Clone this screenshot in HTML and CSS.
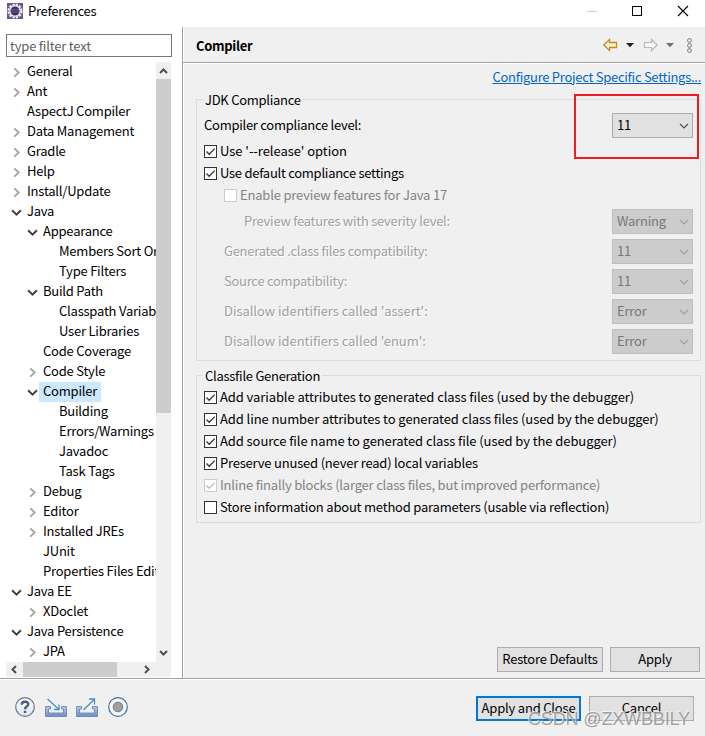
FILE: index.html
```html
<!DOCTYPE html>
<html lang="en">
<head>
<meta charset="utf-8">
<title>Preferences</title>
<link rel="stylesheet" href="styles.css">
</head>
<body>
<svg class="defs" width="0" height="0">
  <symbol id="right" viewBox="0 0 10 10"><path d="M3 1.2 7 5 3 8.8" fill="none" stroke="#a6a6a6" stroke-width="1.7"/></symbol>
  <symbol id="down" viewBox="0 0 10 10"><path d="M1 3 5 7 9 3" fill="none" stroke="#404040" stroke-width="1.8"/></symbol>
  <symbol id="tick" viewBox="0 0 13 13"><path d="M2.5 6.5 5.2 9.3 10.7 3.6" fill="none" stroke="currentColor" stroke-width="1.3"/></symbol>
  <symbol id="combo" viewBox="0 0 10 10"><path d="M1 3 5 7 9 3" fill="none" stroke="currentColor" stroke-width="1.2"/></symbol>
</svg>
<div class="window">
  <header class="titlebar">
    <svg class="app" width="16" height="16" viewBox="0 0 16 16"><rect width="16" height="16" fill="#67568f"/><circle cx="8" cy="8" r="6.5" fill="none" stroke="#eee" stroke-width="2.2" stroke-dasharray="2.2 1.2"/><circle cx="8" cy="8" r="5.2" fill="#3b2d63" stroke="#e6e6e6" stroke-width="1.4"/><path d="M4 6.8h8M4 9h8" stroke="#6d6592"/></svg>
    <span class="title">Preferences</span>
    <svg class="wc" width="110" height="22" viewBox="0 0 110 22"><path d="M2 11.5h10" stroke="#c8c8c8"/><rect x="47.500" y="6.500" width="9" height="9" fill="none" stroke="#000"/><path d="M93 6l10 10M103 6 93 16" stroke="#000" stroke-width="1.1"/></svg>
  </header>
  <div class="main">
    <aside class="side">
      <div class="filter">type filter text</div>
      <div class="treebox">
        <ul class="tree">
          <li><svg><use href="#right"/></svg><span>General</span></li>
          <li><svg><use href="#right"/></svg><span>Ant</span></li>
          <li><svg></svg><span>AspectJ Compiler</span></li>
          <li><svg><use href="#right"/></svg><span>Data Management</span></li>
          <li><svg><use href="#right"/></svg><span>Gradle</span></li>
          <li><svg><use href="#right"/></svg><span>Help</span></li>
          <li><svg><use href="#right"/></svg><span>Install/Update</span></li>
          <li><svg><use href="#down"/></svg><span>Java</span></li>
          <li class="l2"><svg><use href="#down"/></svg><span>Appearance</span></li>
          <li class="l3"><svg></svg><span>Members Sort Order</span></li>
          <li class="l3"><svg></svg><span>Type Filters</span></li>
          <li class="l2"><svg><use href="#down"/></svg><span>Build Path</span></li>
          <li class="l3"><svg></svg><span>Classpath Variables</span></li>
          <li class="l3"><svg></svg><span>User Libraries</span></li>
          <li class="l2"><svg></svg><span>Code Coverage</span></li>
          <li class="l2"><svg><use href="#right"/></svg><span>Code Style</span></li>
          <li class="l2"><svg><use href="#down"/></svg><span class="selected">Compiler</span></li>
          <li class="l3"><svg></svg><span>Building</span></li>
          <li class="l3"><svg></svg><span>Errors/Warnings</span></li>
          <li class="l3"><svg></svg><span>Javadoc</span></li>
          <li class="l3"><svg></svg><span>Task Tags</span></li>
          <li class="l2"><svg><use href="#right"/></svg><span>Debug</span></li>
          <li class="l2"><svg><use href="#right"/></svg><span>Editor</span></li>
          <li class="l2"><svg><use href="#right"/></svg><span>Installed JREs</span></li>
          <li class="l2"><svg></svg><span>JUnit</span></li>
          <li class="l2"><svg></svg><span>Properties Files Editor</span></li>
          <li><svg><use href="#down"/></svg><span>Java EE</span></li>
          <li class="l2"><svg><use href="#right"/></svg><span>XDoclet</span></li>
          <li><svg><use href="#down"/></svg><span>Java Persistence</span></li>
          <li class="l2"><svg><use href="#right"/></svg><span>JPA</span></li>
        </ul>
        <div class="vbar">
          <svg width="15" height="17" viewBox="0 0 15 17"><path d="M4 11 7.500 7.500 11 11" fill="none" stroke="#505050" stroke-width="2"/></svg>
          <div class="vthumb"></div>
          <svg class="end" width="15" height="17" viewBox="0 0 15 17"><path d="M4 6 7.500 9.500 11 6" fill="none" stroke="#505050" stroke-width="2"/></svg>
        </div>
        <div class="hbar">
          <svg width="17" height="15" viewBox="0 0 17 15"><path d="M10 4 6.500 7.500 10 11" fill="none" stroke="#505050" stroke-width="2"/></svg>
          <div class="hthumb"></div>
          <svg class="hend" width="17" height="15" viewBox="0 0 17 15"><path d="M7 4 10.500 7.500 7 11" fill="none" stroke="#505050" stroke-width="2"/></svg>
        </div>
      </div>
    </aside>
    <section class="page">
      <div class="pagehead">
        <h1>Compiler</h1>
        <svg width="96" height="20" viewBox="0 0 96 20"><path d="M1.800 10 7.500 4.500V7.500H14.500V12.500H7.500V15.500Z" fill="#fff6d2" stroke="#c58a20" stroke-width="1.300"/><path d="M24 8h8l-4 4.300Z" fill="#222"/><path d="M55.200 10 49.500 4.500V7.500H42.500V12.500H49.500V15.500Z" fill="#f7f7f7" stroke="#b8b8b8" stroke-width="1.200"/><path d="M64 8h8l-4 4.300Z" fill="#707070"/><g fill="#fff" stroke="#707070"><circle cx="87.500" cy="5.500" r="1.900"/><circle cx="87.500" cy="10.500" r="1.900"/><circle cx="87.500" cy="15.500" r="1.900"/></g></svg>
      </div>
      <div class="content">
        <a class="link">Configure Project Specific Settings...</a>
        <div class="group jdk">
          <div class="legend">JDK Compliance</div>
          <div class="row first"><span>Compiler compliance level:</span><div class="combo"><span>11</span><svg><use href="#combo"/></svg></div></div>
          <div class="check loose"><i><svg><use href="#tick"/></svg></i><span>Use '--release' option</span></div>
          <div class="check"><i><svg><use href="#tick"/></svg></i><span>Use default compliance settings</span></div>
          <div class="check off in wide"><i></i><span>Enable preview features for Java 17</span></div>
          <div class="row off in2"><span>Preview features with severity level:</span><div class="combo"><span>Warning</span><svg><use href="#combo"/></svg></div></div>
          <div class="row off"><span>Generated .class files compatibility:</span><div class="combo"><span>11</span><svg><use href="#combo"/></svg></div></div>
          <div class="row off"><span>Source compatibility:</span><div class="combo"><span>11</span><svg><use href="#combo"/></svg></div></div>
          <div class="row off loose"><span>Disallow identifiers called 'assert':</span><div class="combo"><span>Error</span><svg><use href="#combo"/></svg></div></div>
          <div class="row off loose"><span>Disallow identifiers called 'enum':</span><div class="combo"><span>Error</span><svg><use href="#combo"/></svg></div></div>
          <div class="highlight"></div>
        </div>
        <div class="group cls">
          <div class="legend">Classfile Generation</div>
          <div class="check wide"><i><svg><use href="#tick"/></svg></i><span>Add variable attributes to generated class files (used by the debugger)</span></div>
          <div class="check wide"><i><svg><use href="#tick"/></svg></i><span>Add line number attributes to generated class files (used by the debugger)</span></div>
          <div class="check wide"><i><svg><use href="#tick"/></svg></i><span>Add source file name to generated class file (used by the debugger)</span></div>
          <div class="check"><i><svg><use href="#tick"/></svg></i><span>Preserve unused (never read) local variables</span></div>
          <div class="check off"><i><svg><use href="#tick"/></svg></i><span>Inline finally blocks (larger class files, but improved performance)</span></div>
          <div class="check"><i></i><span>Store information about method parameters (usable via reflection)</span></div>
        </div>
        <div class="pagebuttons"><button class="restore">Restore Defaults</button><button class="apply">Apply</button></div>
      </div>
    </section>
  </div>
  <footer class="footer">
    <svg class="tools" width="116" height="24" viewBox="0 0 116 24">
      <defs><linearGradient id="tray" x2="0" y2="1"><stop stop-color="#b9cbe2"/><stop offset="1" stop-color="#6f8cbd"/></linearGradient><linearGradient id="ring" x2="0" y2="1"><stop stop-color="#fff"/><stop offset="1" stop-color="#dfe6ef"/></linearGradient></defs>
      <circle cx="11" cy="12" r="9.300" fill="url(#ring)" stroke="#65758f" stroke-width="1.200"/>
      <path d="M7.700 9.700C7.700 5.800 14.300 5.800 14.300 9.300 14.300 11.500 11 11.500 11 14.200M11 15.700V18" fill="none" stroke="#4c5c80" stroke-width="2.400"/>
      <path d="M31.500 11.500H36.500V14H34.500V18H49.500V14H47.500V11.500H52.500V21.500H31.500Z" fill="url(#tray)" stroke="#5f7fb0" stroke-width=".8"/>
      <path d="M33.500 4 44.500 14M45 9.500V14.500H40" fill="none" stroke="#4b8fc0" stroke-width="1.300"/>
      <path d="M62.500 11.500H67.500V14H65.500V18H80.500V14H78.500V11.500H83.500V21.500H62.500Z" fill="url(#tray)" stroke="#5f7fb0" stroke-width=".8"/>
      <path d="M69.500 15 80 4.500M75 4H80.500V9.500" fill="none" stroke="#4b8fc0" stroke-width="1.300"/>
      <circle cx="104" cy="12" r="9.300" fill="#f8fbfd" stroke="#3f719c" stroke-width="1.200"/><circle cx="104" cy="12" r="4.800" fill="#a0a0a0" stroke="#777"/>
    </svg>
    <button class="primary">Apply and Close</button><button class="cancel">Cancel</button>
    <div class="mark">CSDN @ZXWBBILY</div>
  </footer>
</div>
</body>
</html>
```
FILE: styles.css
```css
* { box-sizing: border-box; }
body { margin: 0; font: 13px/20px "Noto Sans CJK SC", "Noto Sans", sans-serif; letter-spacing: -.27px; color: #000; background: #fff; white-space: nowrap; overflow: hidden; }
svg { display: block; flex: none; }
.defs { position: absolute; }
.window { width: 705px; height: 736px; display: flex; flex-direction: column; overflow: hidden; }
.titlebar { height: 27px; flex: none; display: flex; padding-left: 7px; }
.app { margin-top: 3px; }
.title { margin: 1px auto 0 5px; }
.wc { margin-right: 10px; }
.main { height: 651px; flex: none; display: flex; }
.side { width: 182px; flex: none; padding: 7px 0 0 6px; }
.filter { width: 166px; height: 23px; border: 1px solid #7a7a7a; padding-left: 3px; line-height: 21px; color: #606060; letter-spacing: -.2px; }
.treebox { margin-top: 5px; width: 165px; height: 615px; display: grid; grid-template: 600px 15px / 150px 15px; }
.tree { margin: 0; padding: 0; list-style: none; overflow: hidden; letter-spacing: -.22px; }
.tree li { display: flex; height: 20px; align-items: center; padding-left: 5px; }
.tree li.l2 { padding-left: 21px; }
.tree li.l3 { padding-left: 37px; }
.tree svg { width: 11px; height: 11px; }
.tree span { margin-left: 1px; padding: 0 4px 2px; line-height: 18px; }
.selected { background: #cce8ff; }
.vbar { background: #f0f0f0; display: flex; flex-direction: column; }
.vthumb { height: 334px; background: #cdcdcd; }
.end { margin-top: auto; }
.hbar { grid-column: 1 / 3; background: #f0f0f0; display: flex; }
.hthumb { width: 94px; background: #cdcdcd; }
.hend { margin-left: 21px; }
.page { flex: 1; background: #f0f0f0; border-left: 1px solid #a0a0a0; box-shadow: inset 1px 0 #fff; display: flex; flex-direction: column; }
.pagehead { height: 37px; flex: none; border-bottom: 1px solid #fff; box-shadow: inset 0 -1px #a0a0a0; display: flex; justify-content: space-between; padding: 8px 7px 0 13px; }
h1 { margin: 1px 0 0; font-size: 13px; line-height: 20px; font-weight: 700; letter-spacing: -.3px; }
.content { flex: 1; display: flex; flex-direction: column; padding: 3px 4px 6px 13px; }
.link { align-self: flex-end; height: 20px; color: #0066cc; text-decoration: underline; }
.group { position: relative; border: 1px solid #dcdcdc; width: 505px; }
.jdk { height: 262px; margin-top: 12px; }
.cls { height: 148px; margin-top: 14px; letter-spacing: -.2px; }
.legend { width: max-content; height: 20px; margin: -10px 0 0 6px; padding: 0 2px; line-height: 19px; background: #f0f0f0; letter-spacing: -.27px; }
.row { display: flex; justify-content: space-between; align-items: center; height: 30px; padding: 0 7px 0 27px; }
.row span { margin-bottom: 2px; }
.row.first { padding-left: 7px; height: 32px; margin-bottom: -2px; }
.row.in2 { padding-left: 47px; margin-top: 1px; }
.row.off { color: #a0a0a0; text-shadow: 1px 1px #fff; }
.combo { width: 81px; height: 25px; margin-bottom: 1px; border: 1px solid #adadad; background: #e1e1e1; display: flex; align-items: center; justify-content: space-between; padding: 0 3px 0 4px; letter-spacing: -.2px; }
.row .combo span { margin-bottom: 1px; }
.combo svg { width: 10px; height: 10px; color: #505050; }
.off .combo { border-color: #bfbfbf; background: #ccc; color: #787878; text-shadow: none; }
.off .combo svg { color: #a0a0a0; }
.check { display: flex; align-items: center; height: 22px; padding: 1px 0 0 7px; }
.check span { margin-bottom: 1px; }
.check.in { padding-left: 27px; }
.check.wide { letter-spacing: -.085px; }
.check.in.wide { letter-spacing: -.18px; }
.loose { letter-spacing: -.05px; }
.check i { width: 13px; height: 13px; border: 1px solid #333; background: #fff; margin-right: 3px; color: #333; }
.check i svg { width: 13px; height: 13px; margin: -1px; }
.check.off { color: #838383; }
.check.off i { border-color: #ccc; color: #bbb; }
button { font: inherit; letter-spacing: -.2px; color: #000; height: 25px; border: 1px solid #adadad; background: #e1e1e1; padding: 0 0 1px; border-radius: 0; line-height: 20px; }
.pagebuttons { margin-top: auto; display: flex; justify-content: flex-end; gap: 7px; padding-right: 1px; }
.restore { width: 106px; }
.apply { width: 90px; }
.footer { position: relative; height: 58px; flex: none; border-top: 1px solid #a0a0a0; box-shadow: inset 0 1px #fff; background: #f0f0f0; display: flex; align-items: flex-start; padding: 17px 11px 0 14px; gap: 8px; }
.tools { margin: -1px auto 0 0; }
.primary { width: 105px; border: 2px solid #0078d7; }
.cancel { width: 105px; }
.mark { position: absolute; left: 528px; top: 29px; font: 18px/22px "Liberation Sans", sans-serif; letter-spacing: -.15px; color: rgba(140,140,140,.8); text-shadow: -1px -1px rgba(255,255,255,.7); }
.highlight { position: absolute; left: 377px; top: -6px; width: 125px; height: 65px; border: 2px solid #ed1c24; }
```
